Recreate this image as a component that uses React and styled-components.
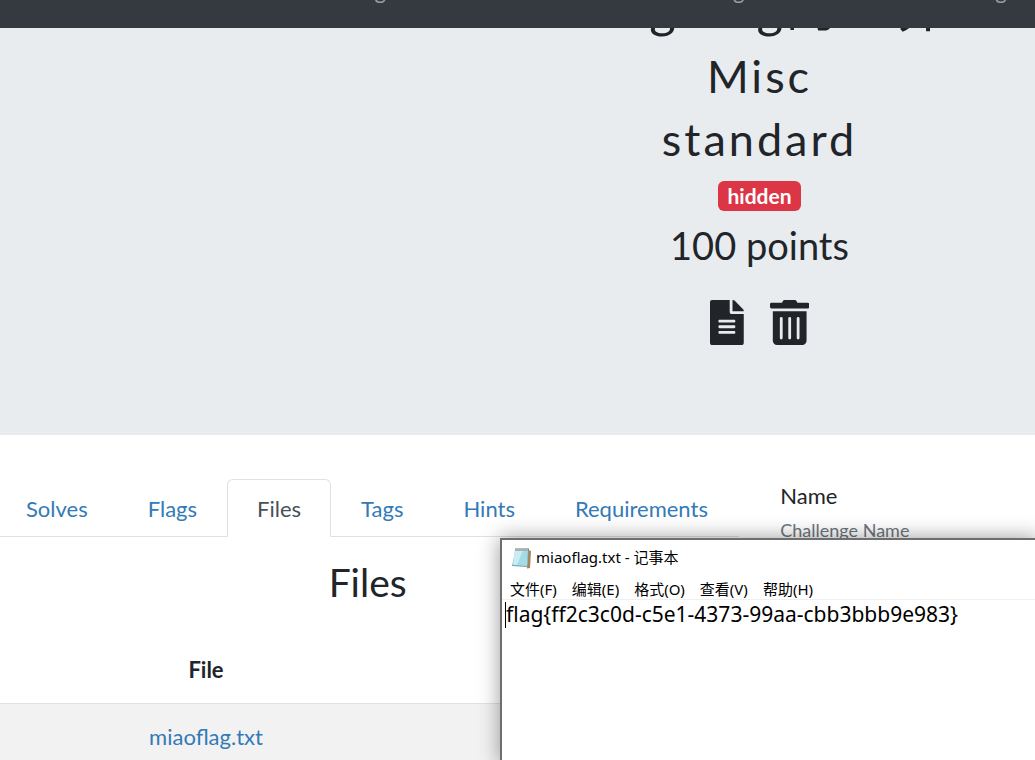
import React from 'react';
import styled, { createGlobalStyle } from 'styled-components';

const Global = createGlobalStyle`
  * { box-sizing: border-box; }
  body { margin: 0; background: #fff; color: #212529; font: 22px/33px Lato, "Noto Sans CJK SC", sans-serif; overflow: hidden; }
  h1, h2, h3, p { margin: 0; font-weight: 400; }
`;
const Page = styled.div`position: relative; height: 100vh; overflow: hidden;`;
const Navbar = styled.nav`
  position: absolute; z-index: 2; top: 0; left: 0; right: 0; height: 28px;
  background: #343a40; overflow: hidden;
  display: flex; align-items: flex-end; gap: 30px; padding: 0 0 21px 80px;
`;
const NavLink = styled.a`color: #9a9da0; text-decoration: none; white-space: nowrap;`;
const Hero = styled.header`
  height: 435px; background: #e9ecef; padding: 0 0 90px 484px; overflow: hidden;
  display: flex; flex-direction: column; align-items: center; justify-content: flex-end;
  text-align: center;
`;
const Title = styled.h1`
  font: 400 51px/64px Lato, "Noto Sans CJK SC", sans-serif; letter-spacing: 3px;
  margin-bottom: 9px; white-space: nowrap;
`;
const Subtitle = styled.h2`
  font: 400 45px/54px Lato, sans-serif; letter-spacing: 3px; margin-bottom: 9px;
`;
const Badge = styled.span`
  background: #dc3545; color: #fff; border-radius: 6px; font-size: 21px; font-weight: 700;
  line-height: 30px; padding: 0 9px; margin-top: 6px;
`;
const Points = styled.h3`font-size: 38px; line-height: 48px; margin: 10px 0 31px;`;
const Actions = styled.div`display: flex; gap: 26px;`;
const IconButton = styled.button`
  border: 0; background: none; padding: 0; color: #212529; display: flex;
  svg { display: block; height: 45px; }
`;
const Main = styled.main`display: grid; grid-template-columns: 5fr 2fr; padding-top: 44px;`;
const Left = styled.section`margin-left: -4px; min-width: 0;`;
const Tabs = styled.nav`display: flex; border-bottom: 1px solid #dee2e6; height: 58px;`;
const Tab = styled.a`
  color: ${p => (p.$active ? '#495057' : '#337ab7')}; text-decoration: none;
  padding: 12px 29px; margin-bottom: -1px;
  border: 1px solid;
  border-color: ${p => (p.$active ? '#dee2e6 #dee2e6 #fff' : 'transparent')};
  border-radius: 6px 6px 0 0;
`;
const Heading = styled.h2`font-size: 39px; line-height: 48px; text-align: center; padding: 21px 0 31px;`;
const Table = styled.table`
  width: 100%; border-collapse: collapse; table-layout: fixed; text-align: center;
  th, td { height: 66px; padding: 0; }
  th:first-child { width: 420px; }
  td { background: #f2f2f2; border-top: 1px solid #dee2e6; }
  a { color: #337ab7; text-decoration: none; }
`;
const Field = styled.div`
  padding-left: 41px; display: flex; flex-direction: column;
  small { font-size: 18px; color: #6c757d; line-height: 36px; }
`;
const Window = styled.section`
  position: absolute; z-index: 3; left: 500px; top: 538px; right: -4px; bottom: -4px;
  background: #fff; border: 2px solid #6e6e6e; box-shadow: 0 0 20px rgba(0,0,0,.4);
  color: #000; font-family: "Noto Sans", "Noto Sans CJK SC", sans-serif;
`;
const TitleBar = styled.div`
  display: flex; align-items: center; gap: 5px; height: 35px; padding-left: 9px; font-size: 15px;
`;
const MenuBar = styled.div`
  display: flex; align-items: flex-end; gap: 15px; padding-left: 8px; height: 25px; border-bottom: 1px solid #f0f0f0;
`;
const MenuButton = styled.button`
  border: 0; background: none; padding: 0; color: #000; white-space: nowrap;
  font: 15px/20px "Noto Sans", "Noto Sans CJK SC", sans-serif;
`;
const Document = styled.div`display: flex; padding: 0 1px;`;
const Caret = styled.span`width: 1px; height: 26px; margin: 2px 0 0 2px; background: #000;`;
const Editor = styled.textarea`
  flex: 1; height: 150px; border: 0; outline: 0; resize: none; padding: 0; overflow: hidden;
  color: #000; font: 21px/28px "Noto Sans", "Noto Sans CJK SC", sans-serif; background: transparent;
`;

const NotepadIcon = () => (
  <svg width="20" height="22" viewBox="0 0 20 22" aria-hidden="true">
    <path d="M17 3l3 1-1 17-3 .500z" fill="#a5855a" />
    <path d="M5 2h13l-2 18-15-1z" fill="#69a9b7" />
    <path d="M4 2h13l-1 17-14-1z" fill="#a5dbe6" />
    <path d="M4 3h8L6 18l-4-.500z" fill="#c8edf3" />
    <path d="M4 3h13" stroke="#e7eeee" strokeWidth="2" />
    <path d="M5 1v3M7 1v3M9 1v3M11 1v3M13 1v3M15 1v3M17 1v3" stroke="#66777b" strokeWidth="1" />
  </svg>
);

const links = ['Statistics', 'Notifications', 'Pages', 'Users', 'Scoreboard', 'Challenges', 'Submissions', 'Config'];
const tabs = ['Solves', 'Flags', 'Files', 'Tags', 'Hints', 'Requirements'];
const menus = ['文件(F)', '编辑(E)', '格式(O)', '查看(V)', '帮助(H)'];

export default function App() {
  return (
    <Page>
      <Global />
      <Navbar>{links.map(l => <NavLink key={l} href="#">{l}</NavLink>)}</Navbar>
      <Hero>
        <Title>dingding的世界</Title>
        <Subtitle>Misc</Subtitle>
        <Subtitle>standard</Subtitle>
        <Badge>hidden</Badge>
        <Points>100 points</Points>
        <Actions>
          <IconButton aria-label="File">
            <svg viewBox="0 0 384 512" fill="currentColor"><path d="M224 136V0H24C10.700 0 0 10.700 0 24v464c0 13.300 10.700 24 24 24h336c13.300 0 24-10.700 24-24V160H248c-13.200 0-24-10.800-24-24zm64 236c0 6.600-5.400 12-12 12H108c-6.600 0-12-5.400-12-12v-8c0-6.600 5.400-12 12-12h168c6.600 0 12 5.400 12 12v8zm0-64c0 6.600-5.400 12-12 12H108c-6.600 0-12-5.400-12-12v-8c0-6.600 5.400-12 12-12h168c6.600 0 12 5.400 12 12v8zm0-72v8c0 6.600-5.400 12-12 12H108c-6.600 0-12-5.400-12-12v-8c0-6.600 5.400-12 12-12h168c6.600 0 12 5.400 12 12zm96-114.100v6.100H256V0h6.100c6.400 0 12.500 2.500 17 7l97.900 98c4.500 4.500 7 10.600 7 16.900z" /></svg>
          </IconButton>
          <IconButton aria-label="Delete">
            <svg viewBox="0 0 448 512" fill="currentColor"><path d="M32 464a48 48 0 0 0 48 48h288a48 48 0 0 0 48-48V128H32zm272-256a16 16 0 0 1 32 0v224a16 16 0 0 1-32 0zm-96 0a16 16 0 0 1 32 0v224a16 16 0 0 1-32 0zm-96 0a16 16 0 0 1 32 0v224a16 16 0 0 1-32 0zM432 32H312l-9.400-18.700A24 24 0 0 0 281.100 0H166.800a23.700 23.700 0 0 0-21.400 13.300L136 32H16A16 16 0 0 0 0 48v32a16 16 0 0 0 16 16h416a16 16 0 0 0 16-16V48a16 16 0 0 0-16-16z" /></svg>
          </IconButton>
        </Actions>
      </Hero>
      <Main>
        <Left>
          <Tabs>{tabs.map(t => <Tab key={t} href="#" $active={t === 'Files'}>{t}</Tab>)}</Tabs>
          <Heading>Files</Heading>
          <Table>
            <thead><tr><th>File</th><th /></tr></thead>
            <tbody><tr><td><a href="#">miaoflag.txt</a></td><td /></tr></tbody>
          </Table>
        </Left>
        <Field><span>Name</span><small>Challenge Name</small></Field>
      </Main>
      <Window>
        <TitleBar><NotepadIcon /><span>miaoflag.txt - 记事本</span></TitleBar>
        <MenuBar>{menus.map(m => <MenuButton key={m}>{m}</MenuButton>)}</MenuBar>
        <Document>
          <Caret />
          <Editor aria-label="Text" defaultValue="flag{ff2c3c0d-c5e1-4373-99aa-cbb3bbb9e983}" />
        </Document>
      </Window>
    </Page>
  );
}
